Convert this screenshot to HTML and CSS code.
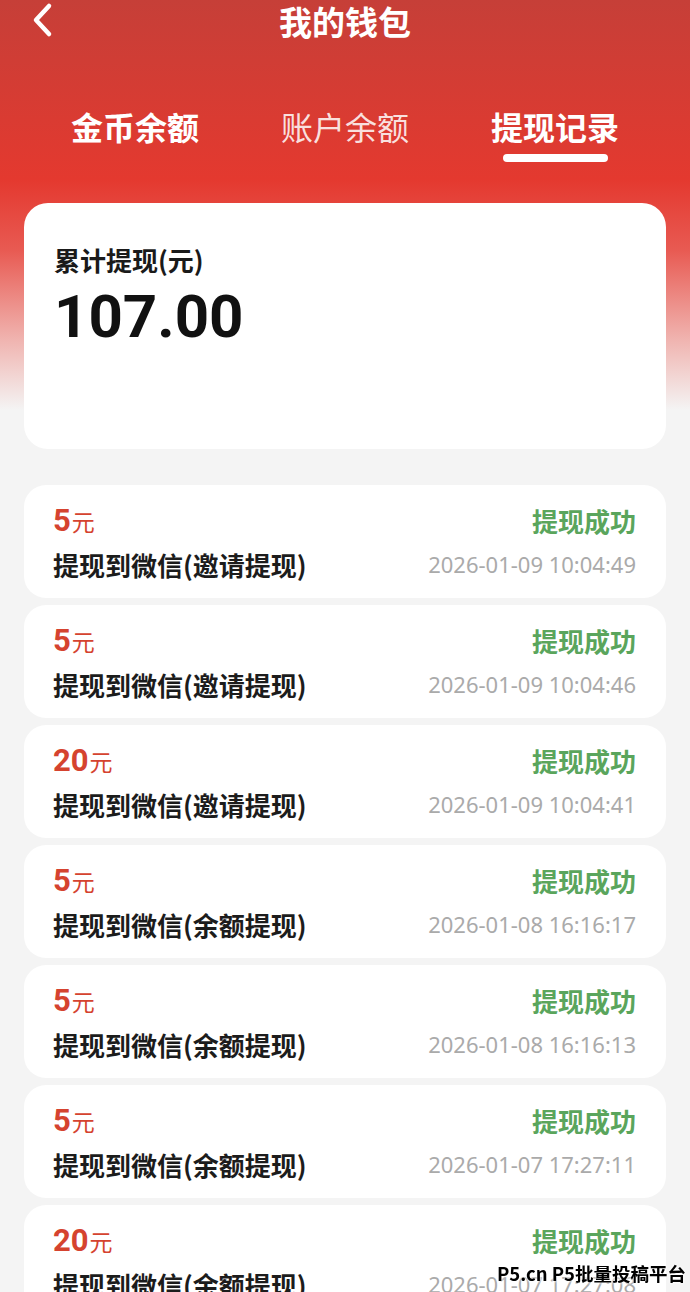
FILE: index.html
```html
<!DOCTYPE html>
<html lang="zh-CN">
<head>
    <meta charset="UTF-8">
    <meta name="viewport" content="width=device-width, initial-scale=1.0">
    <title>我的钱包</title>
    <link rel="stylesheet" href="styles.css">
</head>
<body>
    <div class="page">
        <div class="header">
            <a class="back" href="#">
                <svg width="24" height="36" viewBox="0 0 24 36">
                    <path d="M19 4 L6 18 L19 32" fill="none" stroke="#fff" stroke-width="4.5" stroke-linecap="round" stroke-linejoin="round"/>
                </svg>
            </a>
            <h1>我的钱包</h1>
        </div>

        <div class="tabs">
            <div class="tab bold">金币余额</div>
            <div class="tab">账户余额</div>
            <div class="tab bold active">提现记录</div>
        </div>

        <div class="summary">
            <p class="summary-label">累计提现(元)</p>
            <p class="summary-value">107.00</p>
        </div>

        <div class="records">
            <div class="record">
                <div class="row">
                    <span class="amount">5<small>元</small></span>
                    <span class="status">提现成功</span>
                </div>
                <div class="row">
                    <span class="desc">提现到微信(邀请提现)</span>
                    <span class="time">2026-01-09 10:04:49</span>
                </div>
            </div>
            <div class="record">
                <div class="row">
                    <span class="amount">5<small>元</small></span>
                    <span class="status">提现成功</span>
                </div>
                <div class="row">
                    <span class="desc">提现到微信(邀请提现)</span>
                    <span class="time">2026-01-09 10:04:46</span>
                </div>
            </div>
            <div class="record">
                <div class="row">
                    <span class="amount">20<small>元</small></span>
                    <span class="status">提现成功</span>
                </div>
                <div class="row">
                    <span class="desc">提现到微信(邀请提现)</span>
                    <span class="time">2026-01-09 10:04:41</span>
                </div>
            </div>
            <div class="record">
                <div class="row">
                    <span class="amount">5<small>元</small></span>
                    <span class="status">提现成功</span>
                </div>
                <div class="row">
                    <span class="desc">提现到微信(余额提现)</span>
                    <span class="time">2026-01-08 16:16:17</span>
                </div>
            </div>
            <div class="record">
                <div class="row">
                    <span class="amount">5<small>元</small></span>
                    <span class="status">提现成功</span>
                </div>
                <div class="row">
                    <span class="desc">提现到微信(余额提现)</span>
                    <span class="time">2026-01-08 16:16:13</span>
                </div>
            </div>
            <div class="record">
                <div class="row">
                    <span class="amount">5<small>元</small></span>
                    <span class="status">提现成功</span>
                </div>
                <div class="row">
                    <span class="desc">提现到微信(余额提现)</span>
                    <span class="time">2026-01-07 17:27:11</span>
                </div>
            </div>
            <div class="record">
                <div class="row">
                    <span class="amount">20<small>元</small></span>
                    <span class="status">提现成功</span>
                </div>
                <div class="row">
                    <span class="desc">提现到微信(余额提现)</span>
                    <span class="time">2026-01-07 17:27:08</span>
                </div>
            </div>
        </div>
    </div>

    <div class="watermark">P5.cn P5批量投稿平台</div>
</body>
</html>
```

FILE: styles.css
```css
body {
    margin: 0;
    font-family: "Noto Sans CJK SC", "Noto Sans", sans-serif;
    background-color: #f4f4f4;
    color: #1a1a1a;
}
.page {
    height: 1292px;
    overflow: hidden;
    background: linear-gradient(180deg, #c63f38 0, #e4392f 180px, #e85a52 250px, #f0b4b0 340px, #f4f4f4 410px) no-repeat;
    background-size: 100% 420px;
}
.header {
    position: relative;
    height: 42px;
    display: flex;
    justify-content: center;
    align-items: center;
}
.header h1 {
    margin: 0;
    color: #fff;
    font-size: 33px;
    font-weight: 700;
    line-height: 40px;
}
.back {
    position: absolute;
    left: 30px;
    top: 2px;
}
.tabs {
    display: flex;
    padding: 0 30px;
    margin-top: 60px;
}
.tab {
    flex: 1;
    text-align: center;
    color: rgba(255, 255, 255, 0.85);
    font-size: 32px;
    line-height: 48px;
    position: relative;
    padding-bottom: 12px;
}
.tab.bold {
    font-weight: 700;
    color: #fff;
}
.tab.active::after {
    content: "";
    position: absolute;
    left: 50%;
    bottom: 0;
    width: 105px;
    height: 8px;
    margin-left: -52px;
    background-color: #fff;
    border-radius: 4px;
}
.summary {
    margin: 41px 24px 0;
    height: 246px;
    box-sizing: border-box;
    padding: 39px 30px 0;
    background-color: #fff;
    border-radius: 24px;
}
.summary p {
    margin: 0;
}
.summary-label {
    font-size: 26px;
    font-weight: 700;
    line-height: 36px;
    color: #1a1a1a;
}
.summary-value {
    margin-top: 4px !important;
    font-family: Roboto, "Noto Sans", sans-serif;
    font-size: 60px;
    font-weight: 700;
    line-height: 70px;
    color: #111;
}
.records {
    margin: 36px 24px 0;
    display: flex;
    flex-direction: column;
    gap: 7px;
}
.record {
    height: 113px;
    box-sizing: border-box;
    padding: 15px 30px 0 29px;
    background-color: #fff;
    border-radius: 22px;
}
.row {
    display: flex;
    justify-content: space-between;
    align-items: center;
    height: 40px;
}
.row + .row {
    margin-top: 4px;
}
.amount {
    font-family: Roboto, "Noto Sans CJK SC", sans-serif;
    font-size: 31px;
    font-weight: 700;
    color: #d5432f;
}
.amount small {
    font-family: "Noto Sans CJK SC", sans-serif;
    font-size: 23px;
    font-weight: 400;
    margin-left: 1px;
}
.status {
    font-size: 26px;
    font-weight: 700;
    color: #5aa55c;
}
.desc {
    font-size: 26px;
    font-weight: 700;
    color: #1c1c1c;
}
.time {
    font-family: "Noto Sans", sans-serif;
    font-size: 22px;
    color: #aaaaaa;
}
.watermark {
    position: fixed;
    right: 4px;
    bottom: 6px;
    font-size: 18.5px;
    font-weight: 700;
    color: #000;
    text-shadow: 0 0 3px #fff, 0 0 3px #fff;
}
```
